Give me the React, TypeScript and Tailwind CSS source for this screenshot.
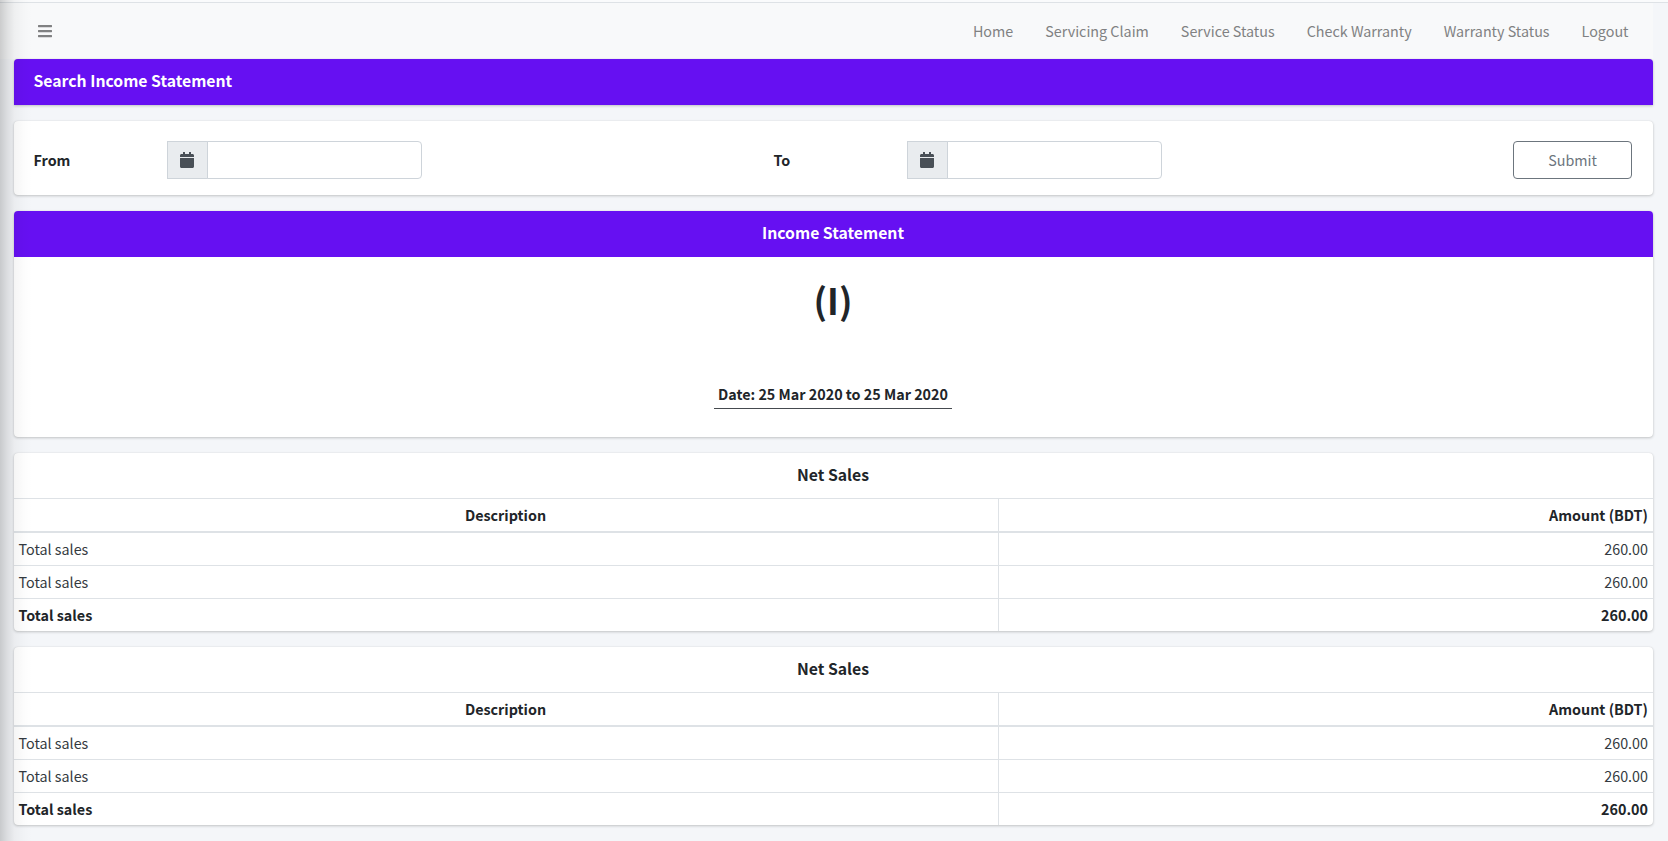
import React from "react";
import { FaBars, FaCalendar } from "react-icons/fa";

const navLinks = [
  "Home",
  "Servicing Claim",
  "Service Status",
  "Check Warranty",
  "Warranty Status",
  "Logout",
];

const rows = [
  { label: "Total sales", amount: "260.00", total: false },
  { label: "Total sales", amount: "260.00", total: false },
  { label: "Total sales", amount: "260.00", total: true },
];

const cardShadow = "shadow-[0_0_1px_rgba(0,0,0,0.125),0_1px_3px_rgba(0,0,0,0.2)]";

function DateField({ label }: { label: string }) {
  return (
    <div className="flex w-[388px] shrink-0 items-center">
      <label className="w-[133px] font-bold">{label}</label>
      <div className="flex h-[38px] w-[255px]">
        <span className="flex w-[41px] items-center justify-center border border-[#ced4da] bg-[#e9ecef] pr-px text-base text-[#495057]">
          <FaCalendar />
        </span>
        <input
          aria-label={label}
          className="-ml-px min-w-0 flex-1 rounded-r border border-[#ced4da] bg-white px-3 outline-none"
        />
      </div>
    </div>
  );
}

function SalesTable() {
  return (
    <section className={`mt-4 rounded bg-white ${cardShadow}`}>
      <h2 className="h-[45px] pt-[10px] pr-px text-center text-[15.76px] leading-[24px] font-bold">Net Sales</h2>
      <div className="flex h-[35px] border-t border-b-2 border-[#dee2e6] leading-[32px] font-bold">
        <div className="w-[985px] border-r border-[#dee2e6] pr-px text-center">Description</div>
        <div className="flex-1 pr-[5px] text-right">Amount (BDT)</div>
      </div>
      {rows.map((row, i) => (
        <div
          key={i}
          className={`flex leading-[31px] ${row.total ? "h-[32px] font-bold" : "h-[33px] border-b border-[#dee2e6] text-[#343a40]"}`}
        >
          <div className="w-[985px] border-r border-[#dee2e6] pl-[4.5px]">{row.label}</div>
          <div className="flex-1 pr-[5px] text-right">{row.amount}</div>
        </div>
      ))}
    </section>
  );
}

export default function App() {
  return (
    <div className="relative h-[841px] overflow-hidden bg-[#f4f6f9] font-['Noto_Sans_CJK_SC','Noto_Sans',sans-serif] text-[14.33px] text-[#212529]">
      <div className="h-[2px] bg-[#fafbfc]" />
      <div className="border-t border-[#dee2e6]">
        <nav className="flex h-[56px] w-[1653px] items-center bg-[#f8f9fa] pr-[24.5px] pl-[36.5px] text-[#808182]">
          <FaBars className="text-base" />
          <div className="ml-auto flex gap-8">
            {navLinks.map((link) => (
              <a key={link} href="#">{link}</a>
            ))}
          </div>
        </nav>
      </div>
      <main className="mr-[15px] ml-[14px]">
        <h1 className={`h-[46px] rounded-t bg-[#6610f2] pt-[10px] pl-[19.5px] text-[15.76px] leading-[24px] font-bold text-white ${cardShadow}`}>
          Search Income Statement
        </h1>
        <section className={`mt-4 flex h-[74px] items-center rounded bg-white pt-[3px] pr-[21px] pl-[19.5px] ${cardShadow}`}>
          <div className="flex gap-[352px]">
            <DateField label="From" />
            <DateField label="To" />
          </div>
          <button className="ml-auto h-[38px] w-[119px] rounded border border-[#6c757d] text-[#6c757d]">
            Submit
          </button>
        </section>
        <section className={`mt-4 h-[226px] rounded bg-white text-center ${cardShadow}`}>
          <h2 className="h-[46px] rounded-t bg-[#6610f2] pt-[10px] pr-px text-[15.76px] leading-[24px] font-bold text-white">
            Income Statement
          </h2>
          <p className="pt-[18px] pr-px text-[35.8px] leading-[48px] font-bold">(I)</p>
          <p className="mr-auto ml-[700px] mt-[59px] h-[27px] w-[238px] border-b border-[#454a4f] leading-[24px] font-bold">
            Date: 25 Mar 2020 to 25 Mar 2020
          </p>
        </section>
        <SalesTable />
        <SalesTable />
      </main>
      <div className="pointer-events-none absolute inset-y-0 left-0 w-[32px] bg-[linear-gradient(to_right,rgba(0,0,0,0.18),rgba(0,0,0,0.1)_22%,rgba(0,0,0,0.04)_45%,rgba(0,0,0,0.01)_75%,rgba(0,0,0,0))]" />
    </div>
  );
}
